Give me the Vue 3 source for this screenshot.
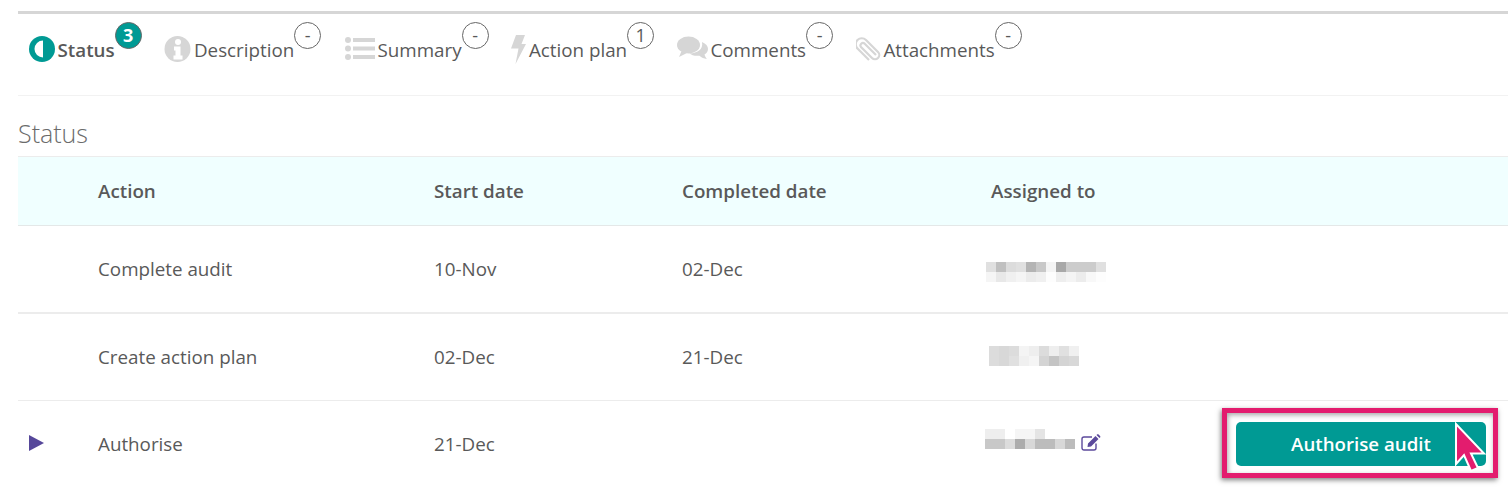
<template>
  <div class="page">
    <div class="tabs">
      <div v-for="tab in tabs" :key="tab.name" class="tab" :class="{ active: tab.active }">
        <svg class="tab-icon" :width="tab.w" height="30" :viewBox="`0 0 ${tab.w} 30`">
          <template v-if="tab.icon === 'status'">
            <circle cx="13" cy="15" r="13" fill="#009a94" />
            <path d="M14 6.500a8.500 8.500 0 0 1 0 17z" fill="#fff" transform="matrix(-1 0 0 1 28 0)" />
          </template>
          <template v-else-if="tab.icon === 'info'">
            <circle cx="13.500" cy="15" r="13" fill="#d6d6d6" />
            <circle cx="14" cy="8" r="3" fill="#fff" />
            <path d="M10 12.500h6.500v9h2v4h-9v-4h2v-5h-1.500z" fill="#fff" />
          </template>
          <template v-else-if="tab.icon === 'list'">
            <circle cx="4" cy="6" r="3" fill="#d6d6d6" />
            <circle cx="4" cy="14.500" r="3" fill="#d6d6d6" />
            <circle cx="4" cy="23" r="3" fill="#d6d6d6" />
            <rect x="9" y="4" width="22" height="4" fill="#d6d6d6" />
            <rect x="9" y="12.500" width="22" height="4" fill="#d6d6d6" />
            <rect x="9" y="21" width="22" height="4" fill="#d6d6d6" />
          </template>
          <path v-else-if="tab.icon === 'bolt'" d="M5 1h9l-3.500 9H15L4.500 30l3-15.500H0z" fill="#d6d6d6" />
          <template v-else-if="tab.icon === 'comments'">
            <ellipse cx="11.500" cy="11" rx="11.500" ry="8.500" fill="#d6d6d6" />
            <path d="M5 16 2 23l8-4z" fill="#d6d6d6" />
            <path d="M25 8c4 1.700 6 4.200 6 7 0 2.300-1.400 4.300-3.500 5.600.3 1.500 1.200 3 2.300 4.400-2.800-.4-5.300-1.500-7.300-3.300-4 .6-8-.4-10.300-2.400 7 .3 14.500-3.500 12.800-11.300z" fill="#d6d6d6" />
          </template>
          <path v-else d="M20 21 8.500 9.500A2.500 2.500 0 0 0 5 13L16 24A4.200 4.200 0 0 0 22 18L10 6A6 6 0 0 0 1.500 14.500L13 26" fill="none" stroke="#d6d6d6" stroke-width="2.200" />
        </svg>
        <span class="tab-name">{{ tab.name }}</span>
        <span class="tab-badge">{{ tab.count }}</span>
      </div>
    </div>

    <h2 class="section-title">Status</h2>

    <div class="row head">
      <div></div>
      <div>Action</div>
      <div>Start date</div>
      <div>Completed date</div>
      <div>Assigned to</div>
    </div>

    <div v-for="row in rows" :key="row.action" class="row body-row">
      <div class="marker"><span v-if="row.current" class="arrow"></span></div>
      <div>{{ row.action }}</div>
      <div>{{ row.start }}</div>
      <div>{{ row.done }}</div>
      <div class="assigned">
        <div class="mosaic" :style="{ marginLeft: row.offset + 'px', marginTop: row.dy + 'px', gridTemplateColumns: `repeat(${row.cells[0].length}, 10px)` }">
          <i v-for="(c, i) in row.cells.flat()" :key="i" :style="{ background: c }"></i>
        </div>
        <svg v-if="row.current" class="edit" width="20" height="17" viewBox="0 0 20 17">
          <path d="M15 9.500V14a2 2 0 0 1-2 2H3a2 2 0 0 1-2-2V5a2 2 0 0 1 2-2h8" fill="none" stroke="#5c4a9c" stroke-width="1.400" />
          <path d="M7 9.500 14.500 2l3 3L10 12.500l-3.500.5zM15.500 1l.8-.8h1l2 2v1l-.8.8z" fill="#5c4a9c" />
        </svg>
        <button v-if="row.current" class="authorise">Authorise audit</button>
      </div>
    </div>

    <div class="highlight"></div>
    <svg class="cursor" width="36" height="54" viewBox="0 0 36 54">
      <path d="M3 2v40l8-9 7 16 7-3-7-14.500h13z" fill="#e31c6e" stroke="#fff" stroke-width="2" />
    </svg>
  </div>
</template>

<script setup>
const tabs = [
  { name: 'Status', icon: 'status', w: 26, count: '3', active: true },
  { name: 'Description', icon: 'info', w: 27, count: '-' },
  { name: 'Summary', icon: 'list', w: 31, count: '-' },
  { name: 'Action plan', icon: 'bolt', w: 15, count: '1' },
  { name: 'Comments', icon: 'comments', w: 31, count: '-' },
  { name: 'Attachments', icon: 'clip', w: 25, count: '-' },
]

const hex = (list) => list.map((v) => '#' + v + v + v)

const rows = [
  {
    action: 'Complete audit', start: '10-Nov', done: '02-Dec', offset: -5, dy: 6,
    cells: [
      hex(['e0', 'c0', 'dc', 'e0', 'b4', 'c8', 'f4', 'a8', 'cc', 'cc', 'cc', 'e0']),
      hex(['f5', 'e8', 'f0', 'f5', 'ec', 'f0', 'fd', 'ee', 'f4', 'ec', 'f8', 'fd']),
    ],
  },
  {
    action: 'Create action plan', start: '02-Dec', done: '21-Dec', offset: -2, dy: -2,
    cells: [
      hex(['dc', 'd8', 'dc', 'f4', 'ee', 'dc', 'ee', 'e0', 'f0']),
      hex(['dc', 'd8', 'e0', 'f0', 'f5', 'd4', 'c4', 'd4', 'd8']),
    ],
  },
  {
    action: 'Authorise', start: '21-Dec', done: '', offset: -6, dy: -10, current: true,
    cells: [
      hex(['ee', 'ee', 'ff', 'f5', 'f5', 'e4', 'ff', 'ff', 'ff']),
      hex(['c8', 'c8', 'dc', 'ac', 'd8', 'bc', 'bc', 'd8', 'bc']),
    ],
  },
]
</script>

<style>
html, body {
  background: #fff;
}
</style>

<style scoped>
.page {
  position: relative;
  width: 1508px;
  height: 487px;
  overflow: hidden;
  padding: 11px 0 0 18px;
  box-sizing: border-box;
  background: #fff;
  color: #595959;
  font-family: "Open Sans", "Liberation Sans", sans-serif;
  font-size: 18.8px;
}

.tabs {
  display: flex;
  height: 85px;
  box-sizing: border-box;
  padding: 8px 0 0 11px;
  border-top: 3px solid #d6d6d6;
  border-bottom: 1px solid #f2f2f2;
}

.tab {
  display: flex;
  align-items: flex-start;
  margin-right: 22.8px;
}

.tab-icon {
  margin-top: 12px;
  flex-shrink: 0;
}

.tab-name {
  margin: 14px 0 0 2.5px;
  line-height: 28px;
  white-space: nowrap;
}

.active .tab-name {
  font-weight: 600;
}

.tab-badge {
  width: 27px;
  height: 27px;
  flex-shrink: 0;
  box-sizing: border-box;
  border: 1px solid #666;
  border-radius: 50%;
  text-align: center;
  font-size: 18px;
  line-height: 24px;
}

.active .tab-badge {
  background: #009a94;
  color: #fff;
  font-weight: 700;
}

.section-title {
  margin: 0;
  height: 60px;
  line-height: 74px;
  font-size: 25px;
  font-weight: 300;
  color: #6b6b6b;
}

.row {
  display: grid;
  grid-template-columns: 80px 336px 248px 309px 1fr;
  align-items: center;
  box-sizing: border-box;
}

.row.head {
  height: 70px;
  background: #f0ffff;
  border-top: 1px solid #ececec;
  border-bottom: 1px solid #e4e8e8;
  font-weight: 600;
}

.body-row {
  height: 86px;
}

.body-row:nth-of-type(3) {
  height: 88px;
  border-bottom: 2px solid #ececec;
}

.body-row:nth-of-type(4) {
  height: 87px;
  padding-bottom: 1px;
  border-bottom: 1px solid #ececec;
}

.marker {
  padding-left: 11px;
}

.arrow {
  display: block;
  width: 0;
  height: 0;
  margin-bottom: 2px;
  border-left: 15px solid #56479a;
  border-top: 8px solid transparent;
  border-bottom: 8px solid transparent;
}

.assigned {
  display: flex;
  align-items: center;
}

.mosaic {
  display: grid;
  grid-auto-rows: 10px;
}

.edit {
  margin: 0 0 4px 6px;
}

.authorise {
  position: absolute;
  left: 1236px;
  top: 422px;
  width: 250px;
  height: 44px;
  padding: 0 0 2px;
  border: 0;
  border-radius: 5px;
  background: #009a94;
  color: #fff;
  font: 600 18.7px "Open Sans", "Liberation Sans", sans-serif;
}

.highlight {
  position: absolute;
  left: 1222px;
  top: 408px;
  width: 276px;
  height: 70px;
  box-sizing: border-box;
  border: 5px solid #e31c6e;
  box-shadow: -1px 2px 5px rgba(0, 0, 0, 0.5), inset 1px 2px 5px rgba(0, 0, 0, 0.35);
}

.cursor {
  position: absolute;
  left: 1453px;
  top: 422px;
}
</style>
